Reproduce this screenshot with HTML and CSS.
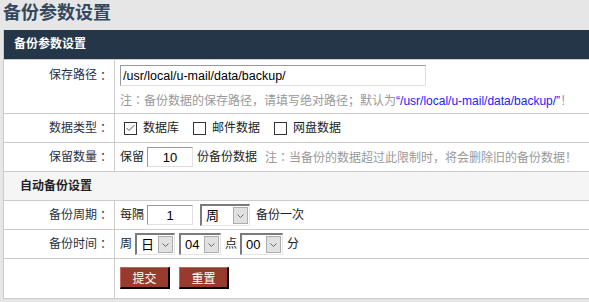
FILE: index.html
```html
<!DOCTYPE html>
<html>
<head>
<meta charset="utf-8">
<title>备份参数设置</title>
<link rel="stylesheet" href="styles.css">
</head>
<body>

  <h1 class="page-title">备份参数设置</h1>

  <form class="panel">
    <div class="panel-head">备份参数设置</div>

    <div class="row row-path">
      <div class="label">保存路径<span class="colon">：</span></div>
      <div class="value">
        <input type="text" class="txt txt-path" value="/usr/local/u-mail/data/backup/">
        <p class="note">注<span class="colon">：</span>备份数据的保存路径，请填写绝对路径；默认为<span class="path">“/usr/local/u-mail/data/backup/”</span>！</p>
      </div>
    </div>

    <div class="row">
      <div class="label">数据类型<span class="colon">：</span></div>
      <div class="value">
        <label class="check"><input type="checkbox" checked>数据库</label>
        <label class="check"><input type="checkbox">邮件数据</label>
        <label class="check"><input type="checkbox">网盘数据</label>
      </div>
    </div>

    <div class="row">
      <div class="label">保留数量<span class="colon">：</span></div>
      <div class="value">
        保留<input type="text" class="txt txt-num" value="10">份备份数据
        <span class="note note-inline">注<span class="colon">：</span>当备份的数据超过此限制时，将会删除旧的备份数据！</span>
      </div>
    </div>

    <div class="row row-sub">自动备份设置</div>

    <div class="row">
      <div class="label">备份周期<span class="colon">：</span></div>
      <div class="value">
        每隔<input type="text" class="txt txt-num" value="1">
        <span class="sel sel-week">
          <select><option>周</option><option>天</option></select>
          <span class="arr"><svg width="7" height="4" viewBox="0 0 7 4"><polyline points="0.5,0.5 3.5,3.5 6.5,0.5" fill="none" stroke="#666"/></svg></span>
        </span>
        <span class="after">备份一次</span>
      </div>
    </div>

    <div class="row">
      <div class="label">备份时间<span class="colon">：</span></div>
      <div class="value">
        周
        <span class="sel sel-day">
          <select><option>日</option><option>一</option></select>
          <span class="arr"><svg width="7" height="4" viewBox="0 0 7 4"><polyline points="0.5,0.5 3.5,3.5 6.5,0.5" fill="none" stroke="#666"/></svg></span>
        </span>
        <span class="sel sel-hour">
          <select><option>04</option><option>05</option></select>
          <span class="arr"><svg width="7" height="4" viewBox="0 0 7 4"><polyline points="0.5,0.5 3.5,3.5 6.5,0.5" fill="none" stroke="#666"/></svg></span>
        </span>
        <span class="unit">点</span>
        <span class="sel sel-min">
          <select><option>00</option><option>30</option></select>
          <span class="arr"><svg width="7" height="4" viewBox="0 0 7 4"><polyline points="0.5,0.5 3.5,3.5 6.5,0.5" fill="none" stroke="#666"/></svg></span>
        </span>
        <span class="unit">分</span>
      </div>
    </div>

    <div class="row row-btns">
      <div class="label"></div>
      <div class="value">
        <button type="submit" class="btn">提交</button>
        <button type="reset" class="btn">重置</button>
      </div>
    </div>
  </form>

</body>
</html>
```

FILE: styles.css
```css
  body {
    margin: 0;
    background: #e6e6e6;
    font-family: "Liberation Sans", "Noto Sans CJK SC", sans-serif;
    font-size: 12px;
    color: #222;
    overflow: hidden;
  }

  .page-title {
    margin: 0 0 0 3px;
    height: 30px;
    line-height: 26px;
    font-size: 18px;
    font-weight: bold;
    color: #34495e;
  }

  .panel {
    margin: 0 0 0 3px;
    width: 620px;
    background: #fff;
    border-left: 1px solid #ccc;
  }

  .panel-head {
    height: 30px;
    box-sizing: border-box;
    line-height: 29px;
    padding-left: 10px;
    background: #253648;
    color: #fff;
    font-weight: bold;
    border-bottom: 1px solid #ccc;
  }

  .row {
    display: flex;
    height: 29px;
    box-sizing: border-box;
    border-bottom: 1px solid #ccc;
    line-height: 20px;
  }

  .label {
    flex: none;
    width: 111px;
    box-sizing: border-box;
    border-right: 1px solid #ccc;
    padding-right: 5px;
    display: flex;
    align-items: center;
    justify-content: flex-end;
    color: #1f3147;
  }

  /* centred full-width colon, as in the original font */
  .colon {
    font-family: "Noto Sans CJK JP", "Noto Sans CJK SC", sans-serif;
  }

  .value {
    display: flex;
    align-items: center;
    padding-left: 5px;
  }

  /* first row: input with a note below */
  .row-path {
    height: 54px;
  }
  .row-path .label {
    align-items: flex-start;
    padding-top: 5px;
    line-height: 21px;
  }
  .row-path .value {
    flex-direction: column;
    align-items: flex-start;
    padding-top: 5px;
  }

  .note {
    margin: 4px 0 0;
    color: #999;
    line-height: 20px;
  }
  .note .path {
    color: #2020ff;
  }
  .note-inline {
    margin: 0 0 0 8px;
  }

  .txt {
    box-sizing: border-box;
    border: 1px solid;
    border-color: #999 #e0e0e0 #e0e0e0 #999;
    font-family: "Liberation Sans", sans-serif;
    color: #000;
    outline: none;
  }
  .txt-path {
    width: 306px;
    height: 21px;
    padding: 0 2px;
    font-size: 12.5px;
  }
  .txt-num {
    width: 46px;
    height: 20px;
    margin: 0 4px 0 3px;
    padding: 0;
    text-align: center;
    font-size: 13px;
  }

  .check {
    display: inline-flex;
    align-items: center;
    margin-right: 10px;
  }
  .check input {
    appearance: none;
    width: 13px;
    height: 13px;
    margin: 0 6px 0 4px;
    border: 1px solid #333;
    background: #fff;
  }
  .check input:checked {
    background: #fff url("data:image/svg+xml,%3Csvg xmlns='http://www.w3.org/2000/svg' width='11' height='11' viewBox='0 0 11 11'%3E%3Cpolyline points='1.5,5 4,7.5 9.5,2' fill='none' stroke='%23555' stroke-width='1'/%3E%3C/svg%3E") no-repeat center;
  }

  .row-sub {
    display: flex;
    align-items: center;
    padding-left: 16px;
    background: #f5f5f5;
    font-weight: bold;
    color: #222;
  }

  /* old style dropdowns */
  .sel {
    display: inline-flex;
    align-items: center;
    height: 22px;
    box-sizing: border-box;
    margin-left: 3px;
    border-style: solid;
    border-width: 2px 1px 1px 2px;
    border-color: #7b7b7b #e6e6e6 #e6e6e6 #7b7b7b;
    background: #fff;
  }
  .sel select {
    appearance: none;
    flex: 1;
    min-width: 0;
    height: 100%;
    border: 0;
    padding: 0 0 0 4px;
    background: transparent;
    font-family: "Liberation Sans", "Noto Sans CJK SC", sans-serif;
    font-size: 13px;
    color: #000;
    outline: none;
  }
  .sel .arr {
    flex: none;
    width: 15px;
    height: 17px;
    margin-right: 1px;
    box-sizing: border-box;
    border: 1px solid #adadad;
    background: #e1e1e1;
    display: flex;
    align-items: center;
    justify-content: center;
  }
  .sel-week { width: 50px; }
  .sel-day { width: 40px; }
  .sel-hour { width: 42px; margin-left: 4px; }
  .sel-min { width: 43px; }

  .after { margin-left: 6px; }
  .unit { margin-left: 4px; }

  .row-btns {
    height: 40px;
  }
  .row-btns .value {
    align-items: flex-start;
    padding-top: 8px;
  }

  .btn {
    width: 50px;
    height: 22px;
    margin: 0 9px 0 0;
    padding: 0;
    border-style: solid;
    border-width: 1px 2px 2px 1px;
    border-color: #c0685b #000 #000 #c0685b;
    background: #983b2e;
    color: #fff;
    font-family: "Noto Sans CJK SC", sans-serif;
    font-size: 12px;
    line-height: 18px;
  }
```
